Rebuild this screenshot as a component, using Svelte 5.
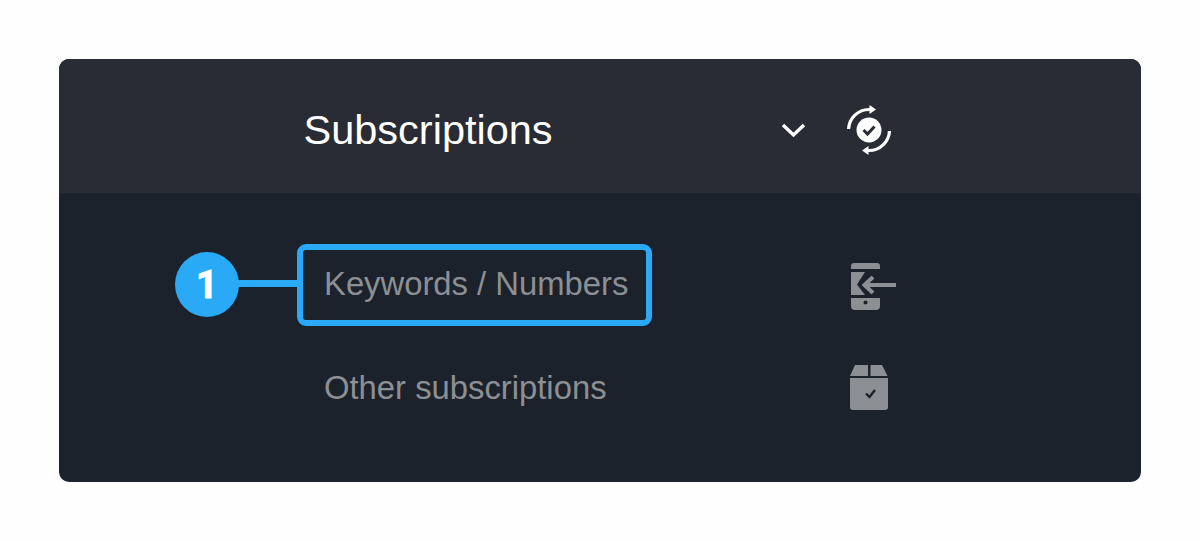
<script>
	const rows = [
		{ label: 'Keywords / Numbers', icon: 'phone', active: true },
		{ label: 'Other subscriptions', icon: 'box', active: false }
	];
</script>

<div class="page">
	<section class="card">
		<header class="head">
			<h1>Subscriptions</h1>
			<svg class="chevron" width="26" height="16" viewBox="0 0 26 16">
				<path d="M2 3 L12.500 13 L23 3" fill="none" stroke="#fff" stroke-width="3.400" />
			</svg>
			<svg class="sync" width="48" height="50" viewBox="0 0 48 50">
				<circle cx="24" cy="25" r="12.500" fill="#fff" />
				<path d="M18.500 25 L22.500 29 L29.500 21.500" fill="none" stroke="#292c35" stroke-width="3" />
				<path d="M3.600 24 A20.500 20.500 0 0 1 24 4.500 H26" fill="none" stroke="#fff" stroke-width="3.200" />
				<path d="M24.500 0 L31 4.500 L24.500 9 Z" fill="#fff" />
				<path d="M44.500 26 A20.500 20.500 0 0 1 24 45.500 H22" fill="none" stroke="#fff" stroke-width="3.200" />
				<path d="M23.500 41 L17 45.500 L23.500 50 Z" fill="#fff" />
			</svg>
		</header>

		<ul class="list">
			{#each rows as row}
				<li class="row">
					<span class="label" class:active={row.active}>
						{row.label}
						{#if row.active}
							<span class="outline"></span>
							<span class="connector"></span>
							<span class="badge">1</span>
						{/if}
					</span>
					{#if row.icon === 'phone'}
						<svg width="48" height="52" viewBox="0 0 48 52">
							<path d="M2 8 A3 3 0 0 1 5 5 H28 A3 3 0 0 1 31 8 V11 H2 Z" fill="#8c8f93" />
							<path d="M2 14 H16 L8 26.500 L16 37 H2 Z" fill="#8c8f93" />
							<path d="M2 40 H31 V48 A4 4 0 0 1 27 52 H6 A4 4 0 0 1 2 48 Z" fill="#8c8f93" />
							<circle cx="16.500" cy="44.500" r="2" fill="#1c222c" />
							<path d="M24 19 L15.500 27 L24 35 M16 27 H47" fill="none" stroke="#8c8f93" stroke-width="4" />
						</svg>
					{:else}
						<svg width="48" height="52" viewBox="0 0 48 52">
							<path d="M6 3 H19 V14 H1 Z" fill="#8c8f93" />
							<path d="M21.500 3 H33 L38.500 14 H21.500 Z" fill="#8c8f93" />
							<path d="M1 16 H39 V45 A3 3 0 0 1 36 48 H4 A3 3 0 0 1 1 45 Z" fill="#8c8f93" />
							<path d="M17 31.500 L20.500 35 L26 28" fill="none" stroke="#1c222c" stroke-width="2.400" />
						</svg>
					{/if}
				</li>
			{/each}
		</ul>
	</section>
</div>

<style>
	:global(body) {
		margin: 0;
		background: #fefefe;
	}

	.page {
		height: 541px;
		padding: 59px 59px 0;
		box-sizing: border-box;
		font-family: "Liberation Sans", Arial, sans-serif;
	}

	.card {
		width: 1082px;
		height: 423px;
		border-radius: 10px;
		overflow: hidden;
		background: #1c222c;
	}

	.head {
		height: 134px;
		box-sizing: border-box;
		padding: 8px 0 0 244.500px;
		display: flex;
		align-items: center;
		background: #292c35;
	}

	h1 {
		width: 477px;
		margin: 0;
		font-size: 41.500px;
		font-weight: 400;
		color: #fff;
	}

	.sync {
		margin-left: 38px;
	}

	.list {
		margin: 0;
		padding: 65px 0 0 265px;
		list-style: none;
	}

	.row {
		height: 52px;
		margin-bottom: 52px;
		display: grid;
		grid-template-columns: 525px 48px;
		align-items: center;
	}

	.label {
		position: relative;
		font-size: 32.800px;
		color: #8c8f93;
	}

	.outline {
		position: absolute;
		left: -27px;
		top: -21px;
		width: 355px;
		height: 82px;
		box-sizing: border-box;
		border: 6px solid #2aa9f6;
		border-radius: 9px;
	}

	.connector {
		position: absolute;
		left: -86px;
		top: 15px;
		width: 62px;
		height: 7px;
		background: #2aa9f6;
	}

	.badge {
		position: absolute;
		left: -149px;
		top: -13px;
		width: 64px;
		height: 65px;
		border-radius: 50%;
		background: #2aa9f6;
		color: #fff;
		font-family: Roboto, sans-serif;
		font-size: 38px;
		font-weight: 700;
		-webkit-text-stroke: 1px #fff;
		display: flex;
		align-items: center;
		justify-content: center;
	}
</style>
